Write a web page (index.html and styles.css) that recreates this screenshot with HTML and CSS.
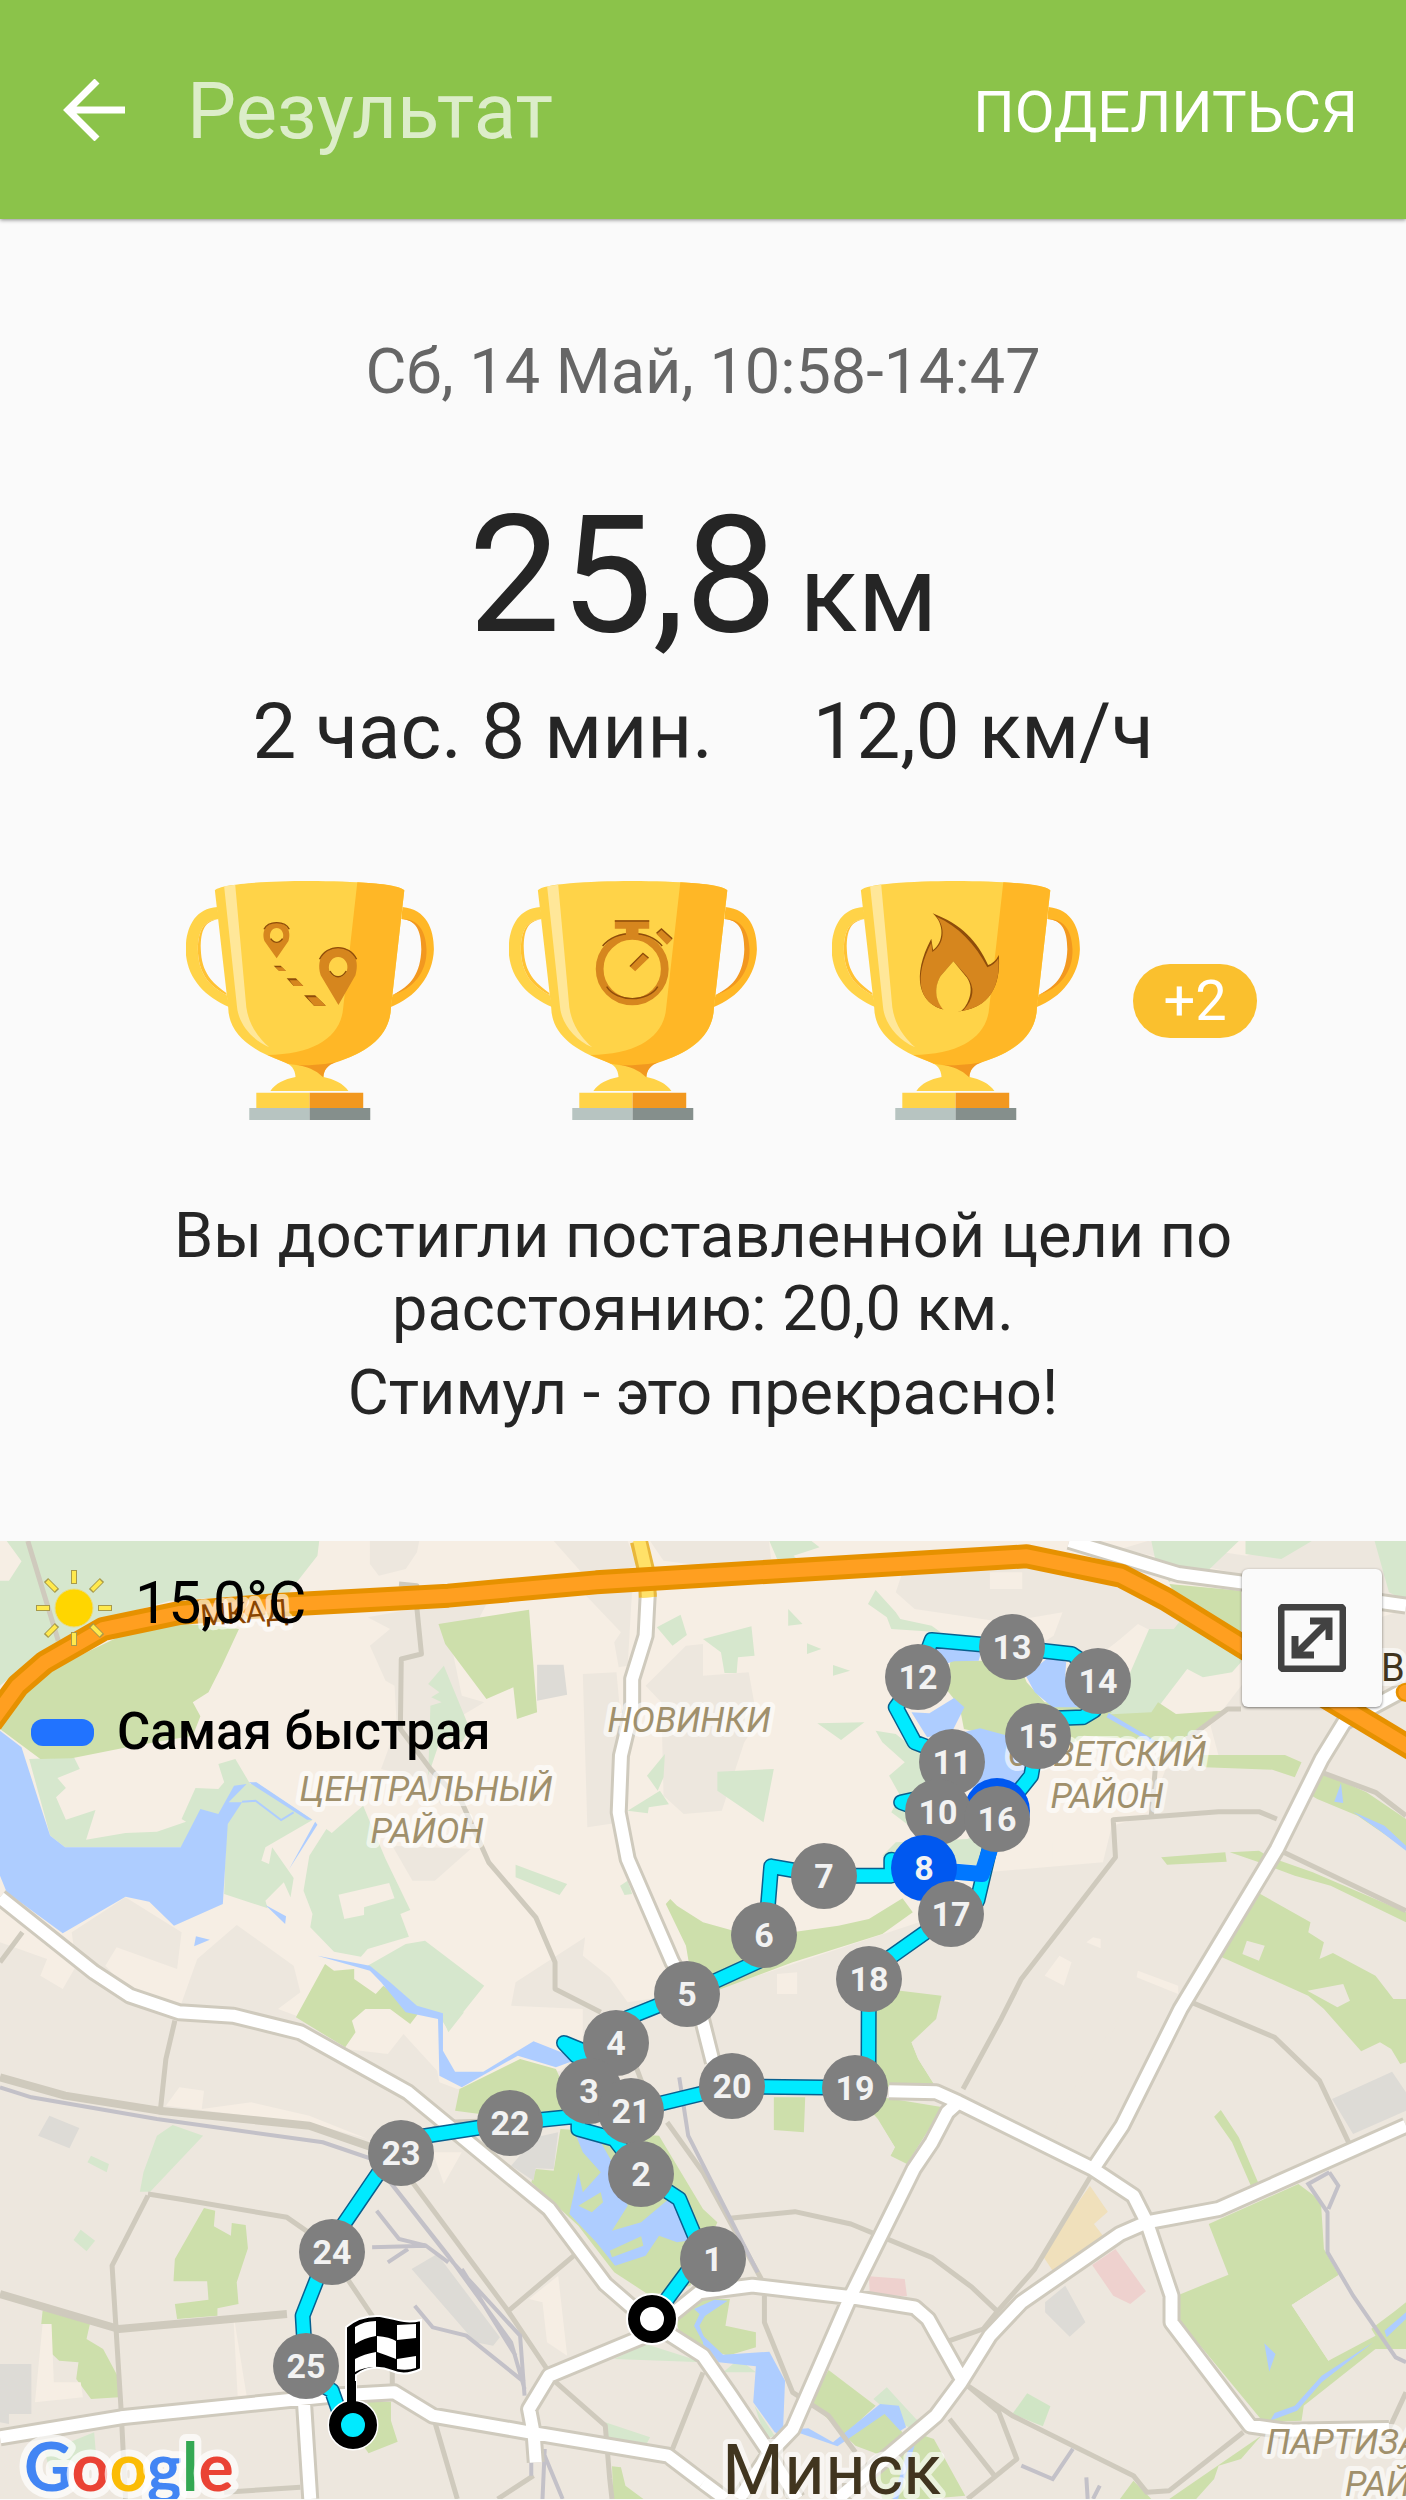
FILE: index.html
```html
<!DOCTYPE html>
<html lang="ru">
<head>
<meta charset="utf-8">
<meta name="viewport" content="width=device-width, initial-scale=1">
<title>Результат</title>
<link rel="stylesheet" href="styles.css">
</head>
<body>
<header class="bar">
  <button class="back" type="button" aria-label="Назад">
    <svg viewBox="0 0 62 62" width="62" height="62"><path d="M34 2 5 31 34 60M4 31H62" fill="none" stroke="#fff" stroke-width="7"/></svg>
  </button>
  <h1 class="title">Результат</h1>
  <button class="share" type="button">ПОДЕЛИТЬСЯ</button>
</header>

<main>
  <section class="summary">
    <p class="date">Сб, 14 Май, 10:58-14:47</p>
    <p class="distance">25,8<span class="unit">км</span></p>
    <p class="stats"><span>2 час. 8 мин.</span><span>12,0 км/ч</span></p>

    <div class="awards">
      <svg class="cup" viewBox="0 0 248 240" role="img" aria-label="Дистанция">
        <g id="cup" transform="scale(.37 .33333) translate(-70 -95)">
          <path fill="#ffb726" d="M655 173C720 180 740 240 740 300C738 380 690 445 622 474L628 437C680 415 712 370 712 300C710 240 690 212 652 209Z"/>
          <path fill="#f2981f" d="M652 209C690 212 706 240 706 300C704 370 680 410 628 437C682 420 722 370 720 300C718 235 690 207 652 209Z"/>
          <path fill="#ffd348" d="M155 173C90 178 70 240 69 300C70 380 115 440 188 474L180 437C130 410 103 370 102 300C103 240 120 212 158 209Z"/>
          <path fill="#ffc233" d="M158 209C120 212 103 240 102 300C103 370 130 410 180 437L179 431C140 400 112 370 110 300C109 240 122 216 158 209Z"/>
          <path fill="#ffd348" d="M148 123C175 86 630 86 660 123L624 474C622 560 560 610 480 636C450 645 443 660 442 683C470 690 495 702 509 725H298C312 702 335 690 366 683C365 660 355 645 330 636C240 600 185 550 184 474Z"/>
          <path fill="#ffb726" d="M533 99C590 102 645 108 660 123L624 474C622 560 560 610 470 641C420 655 370 648 345 643L290 617C420 615 490 560 495 474Z"/>
          <path fill="#f2981f" d="M370 646Q420 652 475 639C452 648 443 662 441 684C420 660 395 652 370 646Z"/>
          <path fill="#ffe799" d="M173 111 203 106 233 474C240 530 270 570 295 594C245 570 212 520 208 474Z"/>
          <path fill="#ffd348" d="M260 730H404V776H260Z"/><path fill="#f2981f" d="M404 730H549V776H404Z"/>
          <path fill="#b7c4c1" d="M241 776H404V812H241Z"/><path fill="#858f8c" d="M404 776H568V812H404Z"/>
        </g>
        <g transform="scale(.37 .33333) translate(-70 -95)" fill="#d6861e">
          <path fill="#8f4d0a" d="M307 349H326L340 365H322ZM342 387H367L387 410H361ZM389 438H419L448 469H416Z"/>
          <path fill-rule="evenodd" d="M315 327 282 275C262 201 367 201 347 275ZM315 236C291 238 291 280 315 280C339 280 339 238 315 236Z"/>
          <path fill-rule="evenodd" d="M482 467 434 378C405 266 558 266 528 378ZM481 323C448 325 448 383 481 383C515 383 515 325 481 323Z"/>
          <path d="M312 354H330L340 365H322ZM350 393H372L387 410H361ZM398 444H424L448 469H416Z"/>
          <path fill="none" stroke="#8f4d0a" stroke-width="4" d="M281 240C292 213 338 213 349 240M431 330C450 283 512 283 531 330M299 268C308 283 322 283 331 268M459 365C470 388 492 388 503 365"/>
        </g>
      </svg>
      <svg class="cup" viewBox="0 0 248 240" role="img" aria-label="Время">
        <use href="#cup"/>
        <g transform="scale(.37 .33333) translate(-944 -95)">
          <ellipse cx="1277" cy="359" rx="88" ry="98" fill="none" stroke="#d6861e" stroke-width="21"/>
          <path fill="none" stroke="#8f4d0a" stroke-width="4" d="M1208 412C1235 460 1320 460 1346 412M1197 290C1235 240 1320 240 1358 290"/>
          <path fill="#d6861e" d="M1230 213H1323V238H1294V262H1260V238H1230ZM1306 311 1322 326 1285 366 1270 351ZM1342 253 1356 238 1386 269 1371 286Z"/>
          <path fill="none" stroke="#8f4d0a" stroke-width="4" d="M1230 215H1323M1271 351 1306 312 1321 326M1343 252 1356 239 1385 268"/>
        </g>
      </svg>
      <svg class="cup" viewBox="0 0 248 240" role="img" aria-label="Калории">
        <use href="#cup"/>
        <g transform="scale(.3571 .33333) translate(-258 -95)">
          <path fill="#8f4d0a" d="M540 192C620 225 665 275 695 347Q715 340 725 317C730 380 718 470 617 486L576 482C500 465 480 380 536 268L541 302C570 280 575 225 540 192Z"/>
          <path fill="#d6861e" d="M552 203C610 230 660 285 693 354Q715 345 724 327C729 390 712 470 625 484Q672 430 635 380L598 336L562 380Q535 430 570 480C497 460 488 380 536 280L539 308C575 282 575 235 552 203Z"/>
          <path fill="#ffd348" d="M598 336 635 384C660 420 638 470 619 486H574C550 460 540 420 562 380Z"/>
        </g>
      </svg>
      <span class="more">+2</span>
    </div>

    <p class="goal">Вы достигли поставленной цели по расстоянию: 20,0 км.</p>
    <p class="cheer">Стимул - это прекрасно!</p>
  </section>

  <section class="map" aria-label="Карта маршрута">
    <svg class="canvas" viewBox="0 0 1406 958">
      <g class="terrain" transform="scale(.44834 .33333) translate(0 -36)">
        <g class="urban">
          <path d="M0 1240 105 1290 90 1340 140 1380 170 1310 160 1210 280 1105 405 1210 395 1320 260 1255 235 1310 290 1390 400 1440 440 1290 528 1188 655 1310 670 1390 620 1440 700 1480 770 1560 865 1575 900 1515 975 1625 980 1660 1020 1680 1250 1625 1300 1560 1300 1440 1140 1430 1150 1360 1305 1225 1300 1280 1360 1345 1400 1420 1600 1380 2050 1180 2170 1170 2200 1030 2460 1000 2480 890 2560 860 2600 720 2720 690 2700 590 2820 380 3136 240V2910H0Z"/>
          <path d="M825 36H935L930 70 905 120 845 140 825 105ZM1235 36H1400L1420 110 1310 150ZM1450 36H1715L1720 90 1568 110 1480 95ZM820 265 920 240 1085 225 1060 290 1010 370 1030 500 1080 520 1030 560 960 580V700L985 830 940 750 850 720 885 590 880 470 860 455 825 350 870 300ZM1300 435 1375 430 1395 720 1385 880 1310 895ZM1300 190 1410 180 1400 410 1380 415 1370 340 1385 310ZM1530 350 1568 345V440L1670 430 1690 580 1660 640 1610 845 1525 855 1480 800 1475 520 1440 470ZM875 950 1050 960 970 1055H920Z"/>
          <path d="M1998 190 2013 130 2290 100 2480 150 2560 210 2780 380 2760 400 2560 300 2520 310 2450 380H2280L2350 320 2370 250 2240 280 2040 240ZM2500 60 3136 240V36H2900L2780 80 2560 36Z"/>
        </g>
        <g class="wood">
          <path d="M0 36H712L708 80 650 180 640 200 550 200 380 215 220 275 100 360 0 470V155L20 155 48 97 15 36ZM65 690 165 685 178 720 128 747 147 777 125 805 147 872 213 843 192 932 280 912 350 908 415 878 405 870 436 777 487 780 500 760 487 705 525 690 558 765 570 760 697 873 592 955 583 995 600 1005 607 955 655 1047 648 1105 633 1060 592 1115 597 1138 500 1095 505 880 403 955H145L112 920Z"/>
          <path fill-rule="evenodd" d="M810 830 860 990 915 1143 893 1155 912 1223 820 1260 805 1283 745 1268 692 1195 697 1155 677 1085 690 980 728 900 740 912ZM755 1097 768 1170 812 1158V1135L880 1108 868 1062Z"/>
          <path d="M905 1245 948 1235 1080 1370 1000 1505 975 1450 925 1440 820 1310ZM990 410 1048 600 1030 640 985 620 955 740 960 530 985 520 962 505 980 490 955 465ZM1150 1007 1265 1065 1248 1098 1150 1045ZM1518 257 1532 318 1500 350 1465 295ZM1483 675 1480 745 1467 785 1443 740ZM1472 785 1492 826 1447 835 1445 853 1400 845ZM1383 1070 1400 1055 1410 1095 1393 1098Z"/>
          <path transform="translate(1568 0)" d="M148 36H242L260 55 202 80 212 92 167 95ZM385 183 430 250 440 270 510 290 530 310 420 300 410 265 368 225ZM190 240 222 285 190 290ZM0 330 108 292 115 380 78 385 75 432H48L40 370ZM232 343 264 360 232 375ZM290 408 328 425 290 440ZM255 583 360 580 308 633ZM32 728 158 720 135 880 32 785ZM385 605 430 615 500 690 520 850 460 890 420 850 440 800 415 740 450 700 400 640ZM590 930 640 900 620 1010 400 980 430 940ZM995 300 1050 300 1080 250 1200 330V400L1180 430 1115 445 1080 420 975 605 870 570 940 470ZM1000 36H1195L1130 120 1080 120 1040 160 1010 100ZM1210 36H1358L1290 90 1210 75ZM1498 36H1568V215L1530 190Z"/>
          <path transform="translate(0 1440)" d="M385 348 453 380 335 548H312L320 490 350 380ZM195 460 203 440 243 465 238 490ZM180 662 212 695 193 727 164 693ZM1350 1240 1450 1285 1440 1310 1355 1285ZM1370 1050 1440 1005 1568 1060ZM100 1330 210 1270 215 1350 110 1380ZM985 20 1035 10 1000 70Z"/>
          <path transform="translate(1568 1440)" d="M380 1170 410 1135 475 1230 515 1260 495 1285 440 1240ZM45 1090 80 1050 118 1090ZM115 1190 160 1280 140 1290Z"/>
          <path fill="#d0e5c5" d="M2258 2655 2291 2593 2343 2632 2326 2692Z"/>
        </g>
        <g class="park">
          <path d="M533 300 495 410 465 490 430 520 447 562 430 620 300 650 160 688 90 690 0 600V520L100 430 270 320 400 285 480 290ZM978 285 1180 242 1198 550 1153 570 1145 475 1085 510 993 345ZM1495 1110 1510 1130 1568 1180 1688 1225 1870 1190 1938 1170 2013 1108 2036 1150 1968 1215 1768 1300 1568 1400 1540 1330 1530 1250 1485 1125ZM725 1305 745 1325 790 1320V1350L838 1395 855 1370 935 1450 915 1485 870 1440H815L785 1475 793 1510 770 1555 660 1465Z"/>
          <path transform="translate(1568 0)" d="M552 395H702L722 460 762 520 902 530 912 550 832 640H712L582 600 572 530 542 480ZM845 560 1000 550 1015 520 1055 555 1160 545 1060 640 850 620ZM1040 165 1200 185V330L1060 210ZM1100 678H1298L1335 700 1320 745 1270 722 1120 715ZM1345 790 1380 730 1480 790 1568 870V960L1460 860 1370 810ZM1022 985 1165 970 1168 998 1035 1007ZM1175 970 1240 965 1265 985 1360 1030 1568 1150V1180L1400 1070 1320 1040 1240 1000Z"/>
          <path transform="translate(1568 0)" fill-rule="evenodd" d="M1230 1085 1355 1180 1350 1210 1385 1240 1375 1290 1405 1272 1500 1340 1540 1410H1568V1600L1555 1605 1535 1560 1510 1540 1468 1567 1385 1440 1350 1400 1150 1280ZM1213 1235 1203 1275 1240 1295 1253 1250ZM1348 1385 1415 1435 1443 1415 1428 1365ZM440 1385 532 1400 520 1470 465 1540 480 1590 515 1665 385 1675V1440ZM380 1700 535 1735 455 1905 418 1880 428 1855 390 1770 370 1740ZM158 1705H228L225 1810 158 1803ZM1155 1743 1195 1825 1238 1960 1222 1970 1180 1840 1140 1763Z"/>
          <path transform="translate(1568 1440)" d="M1328 525 1378 575 1385 720 1418 798 1313 888 1395 1055 1540 910 1568 880V1020L1500 1020 1340 1190 1335 1235 1250 1240 1060 930 1062 857 1172 797 1128 645ZM1245 1280 1200 1350 1150 1370 1140 1410 1100 1470H1040ZM0 870 60 870 50 950 118 970V1015L55 1040-50 990-60 930ZM280 1083 385 1190 330 1260 400 1200 440 1260 470 1330 400 1340 340 1310 240 1180ZM470 1270 515 1290 585 1460 500 1470 400 1470 380 1380ZM960 1415 1000 1470H930Z"/>
          <path transform="translate(0 1440)" d="M455 597 480 605 477 652 515 680 517 642 548 648 553 718 528 820 532 885 485 898V920L395 930 390 885 465 872 462 817H387L390 750ZM95 905 203 930 193 990 230 1020 262 1100 265 1165 203 1170 170 1110 175 1060 132 1055 112 1030V945H92ZM820 1178H872V1235L887 1298 822 1333 800 1290ZM1365 1372 1385 1375 1395 1430 1435 1470H1368ZM1160 150 1240 180 1260 240 1290 300 1100 320 1015 305 1025 240ZM1250 360 1470 380 1568 600 1600 640 1540 830 1450 860 1370 790 1290 650 1185 520 1195 480 1235 485Z"/>
        </g>
        <g class="pale">
          <path transform="translate(1568 1440)" d="M465 100 530 85 550 120 580 118 605 150 580 225H515L480 150ZM360 330H388L428 415 418 440 360 400ZM932 10 895 130 780 380 800 300ZM1313 888 1418 798 1500 980 1395 1055Z" fill="#ede7de"/>
          <path transform="translate(1568 0)" d="M870 1225 887 1230V1258L855 1240ZM795 1280 822 1300 805 1370 762 1340ZM970 1325 1060 1370V1395L967 1345ZM745 940H780V1000H745ZM165 1335 210 1330V1395H165ZM640 130H712V180H640ZM970 285 992 300 900 440 870 400Z"/>
          <path transform="translate(0 1440)" d="M400 235 455 245 450 300 560 280 690 320 820 390 700 345 370 290ZM520 910 550 1160H530ZM95 945H115L120 1120H180L185 1165 78 1180ZM1245 800 1265 1040 1220 1000 1210 880 1180 870ZM965 430 1030 430 990 525Z"/>
        </g>
        <path fill="#dddbd6" d="M110 1760 177 1797 155 1858 85 1820ZM0 2505H70V2655H20V2685L0 2680ZM975 2175 1115 2425 1100 2450 1060 2440 918 2220ZM1198 407H1257L1265 497 1198 515ZM1195 1825 1245 1810 1235 1920 1195 1918 1190 1955 1140 1910ZM2376 2270 2421 2380 2386 2423 2331 2350V2320ZM2971 1710 3105 1628 3136 1690V1745L3018 1815Z"/>
        <path fill="#f0e0bb" d="M2431 1970 2471 2048 2440 2085 2460 2120 2348 2225 2323 2175Z"/>
        <path fill="#eed1ce" d="M2488 2160 2556 2287 2521 2325 2483 2300 2436 2208ZM1938 2242 2018 2250 2023 2302 1940 2295Z"/>
        <g class="water">
          <path d="M0 605 48 655 85 810 112 920 145 955H403L447 840 487 855 522 770 550 765 510 820 540 820 508 885 497 1125 388 1190 333 1118 280 1103 140 1213 15 1090 0 1040ZM555 760H572L697 872 685 872ZM703 878 708 887 645 1020ZM592 1128 638 1162 636 1185ZM437 1222 468 1232 433 1252ZM708 1280 825 1310 870 1360 930 1430 988 1453V1565L1015 1628H1078L1190 1537 1290 1590 1240 1615 1155 1580 1030 1675 980 1640 977 1470 905 1450 850 1360 825 1325Z"/>
          <path transform="translate(1568 0)" d="M515 355 620 370 615 395 560 397 540 405ZM775 380 810 400 808 440 840 535H780L740 490 720 440ZM560 507 583 535 555 610 500 625 465 550 505 553ZM618 598 680 620 730 700 710 790H600L610 700 580 610ZM905 552 1015 640 1012 650 900 565ZM1423 762 1428 822 1408 818ZM1450 848 1520 890 1568 950V965L1510 905Z"/>
          <path transform="translate(0 1440)" d="M1285 380 1340 400 1370 470 1400 590 1365 665 1430 640 1500 560 1530 590 1560 690 1510 700 1470 680 1440 740 1372 770 1330 700 1270 615 1290 490 1300 550 1340 490 1300 430ZM1568 895 1548 950 1568 1000 1575 1000 1560 950 1585 890Z"/>
          <path transform="translate(1568 1440)" d="M-20 900 25 872 55 875 0 925ZM0 980 45 1037 148 1028 183 1115 178 1280 160 1270 112 1180 118 1072 35 1060 0 1005ZM212 1260 235 1258 290 1300 395 1185 437 1190 453 1255 440 1265 405 1215 300 1312 215 1272ZM460 1310H472L435 1470H423ZM1252 1003 1277 1035 1263 1088ZM1520 965 1568 910V930L1525 985ZM1495 1000 1380 1120 1325 1205 1265 1235 1275 1212 1320 1190 1380 1100Z"/>
        </g>
        <path fill="#cddfab" d="M1360 2165 1430 2122 1435 2150 1365 2185ZM1290 2030 1340 1990 1345 2020 1320 2050Z"/>
        <path class="brook" d="M540 818 570 815 627 873 655 850"/>

        <g class="minor">
          <path d="M62 36 130 335M890 165 930 170V240L940 375 895 390 893 600 960 720 1030 820 1090 1000 1195 1165 1238 1300V1380L1340 1450M50 1210 0 1300M390 1475 370 1590 358 1740M850 1870 1000 1780 1100 1775M330 2000 250 2210 270 2640 280 2910M330 1995 400 2010 640 2065 720 2140 830 2360 875 2530V2600M850 1930 740 2130M920 1960 1130 2340 1240 2560 1350 2690 1360 2850 1365 2910M1280 2180 1130 2350M970 2680 1020 2910M1568 2530 1500 2760M1190 2840 1110 2910M500 2890 670 2875M1415 1600 1440 1690"/>
          <path transform="translate(1568 0)" d="M1200 540H1170L1110 600 1010 700 1000 860M1280 870 1240 848H1150L915 872 920 985 710 1350 665 1470 580 1680M1380 730 1500 790 1568 860M1280 960 1568 1145M1090 1420 1275 1525 1375 1655 1440 1840M1568 500 1460 560"/>
          <path transform="translate(1568 1440)" d="M60 628 205 608 330 645 510 745 600 835 655 905M870 490 740 780 655 910 625 960 550 995M-80 340 0 490 130 810M137 860V940L200 1150 280 1220 340 1330M590 1130 690 1220 960 1400 990 1450 1040 1445 1205 1270M590 1130 660 1210 700 1350 590 1470M550 1230 650 1400M1530 1260 1568 1150"/>
          <path class="broad" d="M0 1645 145 1700 355 1745 690 1790 840 1860M0 2295 265 2400 640 2355"/>
        </g>
        <g class="rail">
          <path d="M0 1675 70 1705 350 1770 720 1840 830 1890 1000 2180 1140 2440 1170 2580M870 1960 1010 2200 1160 2420 1170 2600M1030 2220 1150 2480M830 2155 950 2150 1000 2200M840 2045 890 2130 950 2150M865 2200 910 2160M925 2330 965 2395 1040 2420 1170 2560M1515 1645 1535 1820 1690 2230M1215 2760 1210 2910M1215 2780 1255 2910M1185 2790V2840"/>
          <path transform="translate(1568 1440)" d="M1397 490 1350 525 1393 610V730L1450 860 1545 1045 1568 1060M1397 490 1417 530 1395 600M710 1370 780 1410 825 1320M855 1405 858 1470M885 1430 870 1470"/>
        </g>
        <g class="road-edge">
          <path id="roads" d="M1445 190 1440 320 1410 450V540L1385 680 1380 850 1400 990 1500 1300 1560 1440 1590 1600M0 1105 210 1330 290 1400 400 1450 520 1460 670 1510 910 1690 1000 1790 1225 2040 1350 2265 1440 2370 1568 2480 1630 2600 1720 2780M0 2725 270 2665 740 2600 880 2590 965 2660 1180 2710 1490 2780 1568 2860M678 2620 692 2910M1195 2800 1190 2710 1180 2640 1225 2540 1440 2420 1560 2290 1678 2270 1900 2305 2040 2335 2070 2370 2145 2550M2385 36 2628 135 2768 160 3136 230M3136 480 2998 580 2948 690 2848 960 2633 1440 2503 1790 2438 1920M1983 1687 2088 1690 2138 1720 2438 1920 2528 2000 2558 2080 2613 2300V2380L2788 2690 2868 2705 3098 2700M3136 1790 2718 2040 2558 2080 2498 2115 2278 2320 2208 2420 2143 2560 2088 2660 1868 2910M2138 1720 2113 1750 2078 1840 2038 1920 1898 2300 1768 2700 1718 2770 1648 2910M1718 2780 1778 2910M1568 2860 1618 2910"/>
        </g>
        <use class="road-fill" href="#roads"/>
        <path class="yellow-edge" d="M1425 36 1442 130 1445 205"/>
        <path class="yellow-fill" d="M1425 30 1442 130 1445 205"/>
        <path class="ring-edge" d="M-20 580 40 470 100 400 230 300 400 252 620 228 1000 200 1330 160 1568 140 2290 82 2500 140 2600 210 2780 360 3150 660"/>
        <path class="ring-fill" d="M-20 580 40 470 100 400 230 300 400 252 620 228 1000 200 1330 160 1568 140 2290 82 2500 140 2600 210 2780 360 3150 660"/>
        <ellipse cx="3136" cy="490" rx="20" ry="26" fill="#ff9f20" stroke="#e69100" stroke-width="6"/>
      </g>

      <g class="names">
        <text x="201" y="85" class="ring-name" transform="rotate(-4 201 85)">МКАД</text>
        <text x="689" y="191">НОВИНКИ</text>
        <text x="426" y="260">ЦЕНТРАЛЬНЫЙ</text><text x="427" y="302">РАЙОН</text>
        <text x="1107" y="225">СОВЕТСКИЙ</text><text x="1107" y="267">РАЙОН</text>
        <text x="1266" y="913" class="from-left">ПАРТИЗАНСКИЙ</text><text x="1345" y="955" class="from-left">РАЙОН</text>
        <text x="1381" y="140" class="town">В</text>
        <text x="722" y="953" class="city">Минск</text>
      </g>

      <g class="route" transform="scale(.44834 .33333) translate(0 -36)">
        <g class="route-edge">
          <path id="track" d="M1455 2370 1565 2170 1515 2010 1430 1935 1370 1830 1290 1800V1770L1313 1685M1350 1625 1285 1580 1258 1542 1300 1565 1365 1580M1313 1685 1375 1480 1532 1395 1703 1290 1720 1012 1838 1040H1988V992L2060 1015 2093 860 2010 820 2093 795 2123 700 2060 650 2040 640 1998 535 2047 445 2078 333 2257 355 2390 375 2440 420M2448 457 2440 545 2415 565 2355 568 2315 620 2300 740 2223 870 2180 1115 2122 1155 1938 1330 1937 1677 1633 1672 1407 1745 1137 1782 895 1832 740 2138 675 2360 683 2540 740 2585 765 2680"/>
        </g>
        <use class="route-fill" href="#track"/>
        <path class="fastest" d="M2060 1020 2190 1035 2223 900"/>
      </g>

      <g class="pins">
        <g><circle cx="1012" cy="106" r="33"/><text x="1012" y="118">13</text></g>
        <g><circle cx="918" cy="136" r="33"/><text x="918" y="148">12</text></g>
        <g><circle cx="1098" cy="140" r="33"/><text x="1098" y="152">14</text></g>
        <g><circle cx="1038" cy="195" r="33"/><text x="1038" y="207">15</text></g>
        <g><circle cx="952" cy="221" r="33"/><text x="952" y="233">11</text></g>
        <circle class="fast" cx="997" cy="270" r="33"/>
        <g><circle cx="938" cy="271" r="33"/><text x="938" y="283">10</text></g>
        <g><circle cx="997" cy="278" r="33"/><text x="997" y="290">16</text></g>
        <g><circle class="fast" cx="924" cy="327" r="33"/><text x="924" y="339">8</text></g>
        <g><circle cx="824" cy="335" r="33"/><text x="824" y="347">7</text></g>
        <g><circle cx="951" cy="373" r="33"/><text x="951" y="385">17</text></g>
        <g><circle cx="764" cy="394" r="33"/><text x="764" y="406">6</text></g>
        <g><circle cx="869" cy="438" r="33"/><text x="869" y="450">18</text></g>
        <g><circle cx="687" cy="453" r="33"/><text x="687" y="465">5</text></g>
        <g><circle cx="616" cy="502" r="33"/><text x="616" y="514">4</text></g>
        <g><circle cx="732" cy="545" r="33"/><text x="732" y="557">20</text></g>
        <g><circle cx="855" cy="547" r="33"/><text x="855" y="559">19</text></g>
        <g><circle cx="589" cy="550" r="33"/><text x="589" y="562">3</text></g>
        <g><circle cx="631" cy="570" r="33"/><text x="631" y="582">21</text></g>
        <g><circle cx="510" cy="582" r="33"/><text x="510" y="594">22</text></g>
        <g><circle cx="401" cy="612" r="33"/><text x="401" y="624">23</text></g>
        <g><circle cx="641" cy="633" r="33"/><text x="641" y="645">2</text></g>
        <g><circle cx="332" cy="711" r="33"/><text x="332" y="723">24</text></g>
        <g><circle cx="713" cy="718" r="33"/><text x="713" y="730">1</text></g>
        <g><circle cx="306" cy="825" r="33"/><text x="306" y="837">25</text></g>
      </g>
      <circle cx="652" cy="778" r="19" fill="#fff" stroke="#fff" stroke-width="14"/>
      <circle cx="652" cy="778" r="18" fill="#fff" stroke="#000" stroke-width="12"/>
      <path d="M346 865V786Q360 774 380 775C398 778 405 783 421 779V828Q405 836 392 830Q372 822 356 834V865Z" fill="#000" stroke="#fff" stroke-width="2"/>
      <path d="M355 786Q364 780 376 780V795Q364 797 355 803ZM397 784 416 783V797L397 799ZM377 795Q390 796 396 800V818Q386 814 377 811ZM355 818Q364 813 376 811V826Q364 826 355 831ZM397 818 416 815V827Q407 830 397 828Z" fill="#fff"/>
      <circle cx="353" cy="884" r="19" fill="#00eaff" stroke="#fff" stroke-width="13"/>
      <circle cx="353" cy="884" r="18" fill="#00eaff" stroke="#000" stroke-width="12"/>
      <path d="M347 840H356V870H347Z"/>
      <text class="brand" x="24" y="950"><tspan fill="#4285f4">G</tspan><tspan fill="#ea4335">o</tspan><tspan fill="#fbbc05">o</tspan><tspan fill="#4285f4">g</tspan><tspan fill="#34a853">l</tspan><tspan fill="#ea4335">e</tspan></text>
    </svg>

    <div class="overlay">
      <div class="info">
        <p class="weather">
          <svg viewBox="0 0 78 78" width="78" height="78" aria-hidden="true">
            <circle cx="39" cy="39" r="19" fill="#ffd600" stroke="#e8dc86" stroke-width="1"/>
            <path d="M39 1V15M39 63V77M1 39H15M63 39H77M11 11 22 22M56 56 67 67M67 11 56 22M22 56 11 67" stroke="#a89a4a" stroke-width="6"/>
            <path d="M39 2V14M39 64V76M2 39H14M64 39H76M12 12 21 21M57 57 66 66M66 12 57 21M21 57 12 66" stroke="#ffe94d" stroke-width="4"/>
          </svg>
          <span>15,0°C</span>
        </p>
        <p class="legend"><i class="swatch"></i><span>Самая быстрая</span></p>
      </div>
      <button class="expand" type="button" aria-label="Развернуть карту">
        <svg viewBox="0 0 68 68" width="68" height="68"><rect x="3" y="3" width="62" height="62" rx="3" fill="#fafafa" stroke="#424242" stroke-width="7"/><path d="M18 50 50 18" stroke="#424242" stroke-width="7"/><path d="M32 17H51V36M17 32V51H36" fill="none" stroke="#424242" stroke-width="7"/></svg>
      </button>
    </div>
  </section>
</main>
</body>
</html>
```
FILE: styles.css
```css
* { box-sizing: border-box; }
body {
  margin: 0;
  background: #fafafa;
  color: #252525;
  font-family: Roboto, "Liberation Sans", sans-serif;
}
p, h1 { margin: 0; font-weight: 400; }
button {
  padding: 0;
  border: 0;
  background: none;
  color: inherit;
  font: inherit;
  cursor: pointer;
}
svg { display: block; }

.bar {
  position: relative;
  display: flex;
  align-items: center;
  height: 219px;
  padding: 0 48px 0 63px;
  background: #8bc34a;
  color: #fff;
  box-shadow: 0 1px 4px rgba(0, 0, 0, .45);
}
.title {
  flex: 1;
  margin-left: 62px;
  padding-top: 4px;
  font-size: 78px;
  line-height: 90px;
  color: rgba(255, 255, 255, .7);
}
.share { padding-top: 4px; font-size: 58px; line-height: 70px; }

.summary {
  display: flex;
  flex-direction: column;
  align-items: center;
  padding: 118px 120px 112px;
  text-align: center;
}
.date { font-size: 63px; line-height: 70px; color: #666; }
.distance { margin-top: 70px; font-size: 164px; line-height: 196px; }
.unit { margin-left: 22px; font-size: 108px; line-height: 110px; }
.stats {
  display: flex;
  gap: 100px;
  margin-top: 13px;
  font-size: 78px;
  line-height: 92px;
}
.awards {
  display: flex;
  align-items: center;
  gap: 75px;
  margin-top: 103px;
  padding-left: 37px;
}
.cup { width: 248px; height: 240px; }
.more {
  width: 124px;
  margin-left: -22px;
  border-radius: 37px;
  background: #fac02e;
  color: #fff;
  font-size: 56px;
  line-height: 74px;
}
.goal { margin-top: 78px; font-size: 63px; line-height: 73px; }
.cheer { margin-top: 11px; font-size: 63px; line-height: 73px; }

.map { position: relative; overflow: hidden; background: #f6eee4; }
.canvas { width: 100%; height: auto; }
.terrain path, .route path { vector-effect: non-scaling-stroke; }
.urban { fill: #ede7de; }
.wood { fill: #d6e7cd; }
.park { fill: #cddfab; }
.pale { fill: #f6eee4; }
.water { fill: #aecdff; }
.brook { fill: none; stroke: #aecdff; stroke-width: 2px; }
.minor { fill: none; stroke: #cfcabd; stroke-width: 5px; stroke-linejoin: round; }
.broad { stroke-width: 8px; }
.rail { fill: none; stroke: #c3c1c8; stroke-width: 4px; }
.road-edge { fill: none; stroke: #cfcabd; stroke-width: 18px; stroke-linejoin: round; }
.road-fill { fill: none; stroke: #fff; stroke-width: 12px; stroke-linejoin: round; }
.yellow-edge { fill: none; stroke: #e8b73c; stroke-width: 18px; }
.yellow-fill { fill: none; stroke: #ffe168; stroke-width: 12px; }
.ring-edge { fill: none; stroke: #e69100; stroke-width: 24px; stroke-linejoin: round; }
.ring-fill { fill: none; stroke: #ff9f20; stroke-width: 14px; stroke-linejoin: round; }
.route-edge { fill: none; stroke: #07608f; stroke-width: 16px; stroke-linejoin: round; }
.route-fill { fill: none; stroke: #00eaff; stroke-width: 13px; stroke-linejoin: round; }
.fastest { fill: none; stroke: #0077ff; stroke-width: 16px; stroke-linejoin: round; }

.names {
  fill: #a0906c;
  stroke: rgba(255, 255, 255, .6);
  stroke-width: 10px;
  stroke-linejoin: round;
  paint-order: stroke;
  font-size: 35px;
  font-style: italic;
  text-anchor: middle;
}
.names .ring-name { fill: #8a4500; font-size: 30px; font-style: normal; text-anchor: start; }
.names .from-left { text-anchor: start; }
.names .town { fill: #41351f; font-size: 38px; font-style: normal; text-anchor: start; }
.names .city { fill: #41351f; font-size: 71px; font-style: normal; text-anchor: start; }

.pins { font-size: 34px; font-weight: 700; text-anchor: middle; }
.pins circle { fill: #7f7f7f; }
.pins .fast { fill: #0058f0; }
.pins text { fill: #f2f2f2; }
.brand {
  font-family: Lato, sans-serif;
  font-size: 66px;
  font-weight: 700;
  stroke: rgba(255, 255, 255, .7);
  stroke-width: 14px;
  stroke-linejoin: round;
  paint-order: stroke;
}

.overlay {
  position: absolute;
  inset: 28px 24px auto 31px;
  display: flex;
  justify-content: space-between;
  align-items: flex-start;
  color: #000;
}
.weather {
  display: flex;
  align-items: flex-start;
  gap: 22px;
  padding-left: 4px;
  font-size: 59px;
  line-height: 68px;
}
.legend {
  display: flex;
  align-items: center;
  gap: 23px;
  margin-top: 54px;
  font-size: 51px;
  font-weight: 500;
  line-height: 62px;
}
.swatch { width: 63px; height: 27px; border-radius: 12px; background: #2173ff; }
.expand {
  display: grid;
  place-items: center;
  width: 140px;
  height: 138px;
  border-radius: 6px;
  background: #fafafa;
  box-shadow: 0 1px 3px rgba(0, 0, 0, .5);
}
```
